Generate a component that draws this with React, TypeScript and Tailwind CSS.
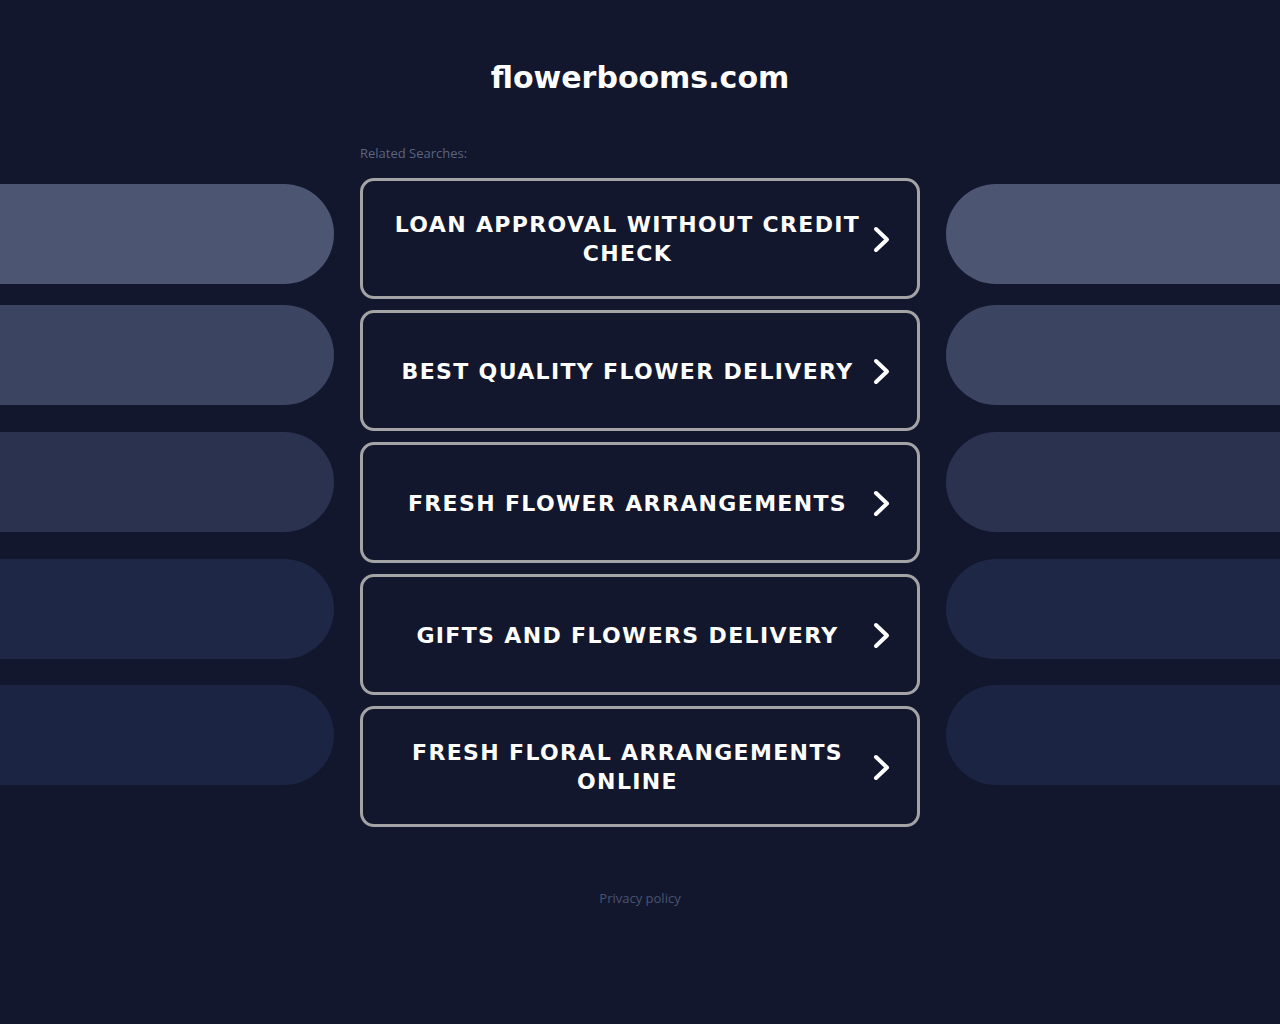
const searches = [
  "LOAN APPROVAL WITHOUT CREDIT CHECK",
  "BEST QUALITY FLOWER DELIVERY",
  "FRESH FLOWER ARRANGEMENTS",
  "GIFTS AND FLOWERS DELIVERY",
  "FRESH FLORAL ARRANGEMENTS ONLINE",
];

// decorative pills beside the list, top to bottom
const pills = [
  { color: "bg-[#4c5673]", mt: "mt-0" },
  { color: "bg-[#3b4461]", mt: "mt-[21px]" },
  { color: "bg-[#2a3250]", mt: "mt-[27px]" },
  { color: "bg-[#1f2747]", mt: "mt-[27px]" },
  { color: "bg-[#1c2444]", mt: "mt-[26px]" },
];

const Chevron = () => (
  <svg width="18" height="27" viewBox="0 0 18 27" fill="none">
    <polyline
      points="3,3 14,13.5 3,24"
      stroke="white"
      strokeWidth="4"
      strokeLinecap="round"
      strokeLinejoin="round"
    />
  </svg>
);

const PillColumn = ({ side }: { side: "left" | "right" }) => (
  <div className="flex flex-col pt-[184px]">
    {pills.map((p, i) => (
      <div
        key={i}
        className={`${p.color} ${p.mt} h-[100px] w-full ${
          side === "left" ? "rounded-r-[50px]" : "rounded-l-[50px]"
        }`}
      />
    ))}
  </div>
);

export default function App() {
  return (
    <div className="min-h-screen bg-[#12172d]">
      <h1
        className="pt-[59px] text-center text-[30px] font-bold leading-[38px] text-white"
        style={{ fontFamily: '"DejaVu Sans", sans-serif' }}
      >
        flowerbooms.com
      </h1>

      <div className="-mt-[97px] grid grid-cols-[334px_26px_560px_26px_334px]">
        <PillColumn side="left" />
        <div />
        <div className="flex flex-col pt-[144px]">
          <p
            className="h-[34px] text-[13px] leading-[18px] text-[#5c6480]"
            style={{ fontFamily: '"Open Sans", sans-serif' }}
          >
            Related Searches:
          </p>
          <div className="flex flex-col gap-[11px]">
            {searches.map((s) => (
              <a
                key={s}
                href="#"
                className="flex h-[121px] items-center rounded-[14px] border-[3px] border-[#a4a4a6] bg-[#12172d] pt-[1px] pl-[27px] pr-[26px]"
              >
                <span
                  className="flex-1 text-center text-[22px] font-bold leading-[29px] tracking-[1.35px] text-white"
                  style={{ fontFamily: '"DejaVu Sans", sans-serif' }}
                >
                  {s}
                </span>
                <span className="ml-[8px] flex w-[18px] justify-center">
                  <Chevron />
                </span>
              </a>
            ))}
          </div>
          <p
            className="mt-[62px] text-center text-[13px] leading-[18px] text-[#4b5370]"
            style={{ fontFamily: '"Open Sans", sans-serif' }}
          >
            Privacy policy
          </p>
        </div>
        <div />
        <PillColumn side="right" />
      </div>
    </div>
  );
}
